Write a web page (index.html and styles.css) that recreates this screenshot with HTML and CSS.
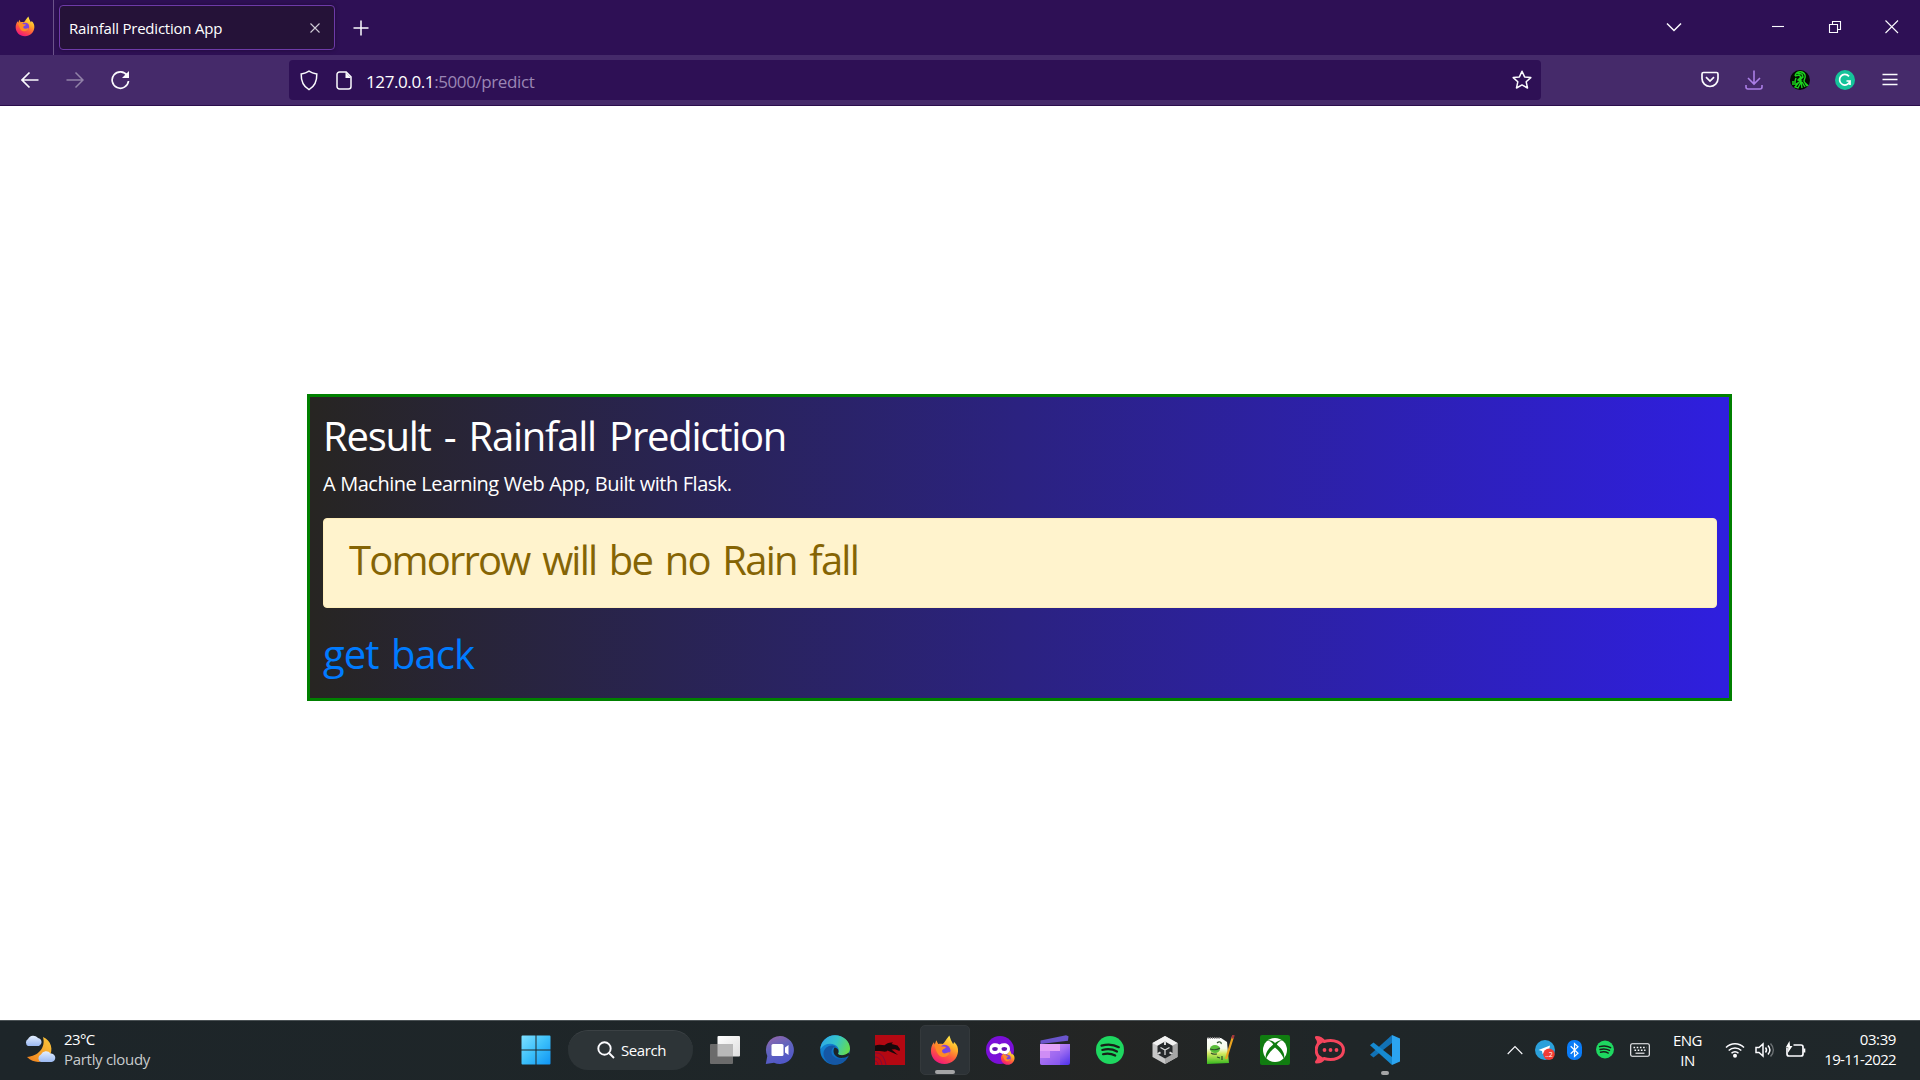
FILE: index.html
```html
<!DOCTYPE html>
<html lang="en">
<head>
<meta charset="utf-8">
<title>Rainfall Prediction App</title>
<link rel="stylesheet" href="styles.css">
</head>
<body>
<svg width="0" height="0" class="defs" aria-hidden="true">
  <defs>
    <linearGradient id="ffBody" x1=".8" y1="0" x2=".3" y2="1"><stop offset="0" stop-color="#fff44f"/><stop offset=".35" stop-color="#ffb028"/><stop offset=".65" stop-color="#ff5a3c"/><stop offset="1" stop-color="#f0147e"/></linearGradient>
    <radialGradient id="ffCore"><stop offset="0" stop-color="#6a4be8"/><stop offset="1" stop-color="#8a3fd8"/></radialGradient>
    <linearGradient id="winG" x1="0" y1="0" x2="1" y2="1"><stop offset="0" stop-color="#7fe0ff"/><stop offset=".5" stop-color="#3cc0fa"/><stop offset="1" stop-color="#0f94f4"/></linearGradient>
    <linearGradient id="chatG" x1="0" y1="0" x2=".4" y2="1"><stop offset="0" stop-color="#9a66a8"/><stop offset=".5" stop-color="#6264bd"/><stop offset="1" stop-color="#5158c8"/></linearGradient>
    <linearGradient id="edgeTop" x1="0" y1=".3" x2="1" y2=".6"><stop offset="0" stop-color="#2fa8e8"/><stop offset=".5" stop-color="#35c5c9"/><stop offset="1" stop-color="#66dc4c"/></linearGradient>
    <linearGradient id="edgeBot" x1="0" y1="0" x2=".6" y2="1"><stop offset="0" stop-color="#1793e0"/><stop offset="1" stop-color="#0b62b5"/></linearGradient>
    <linearGradient id="moonG" x1="1" y1="0" x2="0" y2="1"><stop offset="0" stop-color="#fbc93c"/><stop offset="1" stop-color="#f07e1c"/></linearGradient>
    <linearGradient id="cloudG" x1="0" y1="0" x2="0" y2="1"><stop offset="0" stop-color="#e4efff"/><stop offset="1" stop-color="#9bb9f2"/></linearGradient>
    <linearGradient id="tvG" x1="0" y1="0" x2="1" y2="1"><stop offset="0" stop-color="#fff"/><stop offset="1" stop-color="#dedede"/></linearGradient>
    <linearGradient id="clipG" x1="0" y1="0" x2="1" y2="1"><stop offset="0" stop-color="#e6a4f8"/><stop offset=".5" stop-color="#a673f2"/><stop offset="1" stop-color="#4c30ea"/></linearGradient>
    <linearGradient id="nppG" x1="0" y1="0" x2="0" y2="1"><stop offset="0" stop-color="#fff"/><stop offset=".4" stop-color="#f4fbe8"/><stop offset=".6" stop-color="#d3ea62"/><stop offset="1" stop-color="#35b81e"/></linearGradient>
    <symbol id="firefox" viewBox="0 0 30 30">
      <path d="M15 29.500C7 29.500 1 23.500 1 16c0-4 1.200-6.500 3-9l.9 2.300L6.500 5l2 3.800c1.500-.5 3-.5 4.500 0 1.600-1 2.500-3 4-5L20 0l1.800 5 2.200 4 .9-2.200C28.500 10 29.200 13 29 16.500 28.500 24 22.500 29.500 15 29.500z" fill="url(#ffBody)"/>
      <circle cx="15.200" cy="15.500" r="6" fill="url(#ffCore)"/>
      <path d="M4.500 10c2.500-1.500 5-1 7 1.200 2 .4 3.800.3 5 .8-.5 2-3.300 2-4 3.500-.4 1.500.8 3 2.800 3 2.200.1 3.500-1.700 5.500-.8-1.500 4-6 5.500-9.500 4C7 19.500 6.500 15 4.500 10z" fill="#ff8a25"/>
    </symbol>
    <symbol id="spotify" viewBox="0 0 28 28">
      <circle cx="14" cy="14" r="14" fill="#1ed760"/>
      <path d="M5.500 9.600c6-1.700 12.400-1.200 17.300 1.600M6.300 14c5-1.400 10.400-.9 14.700 1.500M7 18.200c4.200-1.200 8.500-.7 12.200 1.300" fill="none" stroke="#172019" stroke-width="2.200" stroke-linecap="round"/>
    </symbol>
  </defs>
</svg>

<header class="tabstrip">
  <div class="fx-view"><svg width="20" height="21"><use href="#firefox"/></svg></div>
  <div class="tab">
    <span class="tab-title">Rainfall Prediction App</span>
    <svg class="tab-close" width="10" height="10" viewBox="0 0 10 10"><path d="M.5.500l9 9M9.500.500l-9 9" class="line"/></svg>
  </div>
  <svg class="new-tab" width="16" height="16" viewBox="0 0 16 16"><path d="M8 .500v15M.5 8h15" class="line w15"/></svg>
  <div class="window-buttons">
    <svg class="list-tabs" width="16" height="10" viewBox="0 0 16 10"><path d="M1 1.500l7 7 7-7" class="line w15"/></svg>
    <svg width="57" height="14" viewBox="0 0 57 14"><path d="M23 6.500h12" class="line"/></svg>
    <svg width="57" height="14" viewBox="0 0 57 14"><path d="M23.500 4.500h8v8h-8zM26.500 4.500v-3h8v8h-3" class="line"/></svg>
    <svg width="57" height="14" viewBox="0 0 57 14"><path d="M22.500.500l12.500 12.500M35 .500L22.500 13" class="line"/></svg>
  </div>
</header>

<nav class="toolbar">
  <div class="nav-buttons">
    <svg width="18" height="18" viewBox="0 0 18 18"><path d="M17.500 9H1.200M8.500 1.500L1 9l7.500 7.500" class="line w18"/></svg>
    <svg class="dim" width="18" height="18" viewBox="0 0 18 18"><path d="M.5 9h16.300M9.500 1.500L17 9l-7.500 7.500" class="line w15"/></svg>
    <svg class="reload" width="20" height="20" viewBox="0 0 20 20"><path d="M17.200 5.500A8.200 8.200 0 1 0 18.500 11" class="line w18"/><path d="M19 1v7h-7z" fill="#fbfbfe"/></svg>
  </div>
  <div class="urlbar">
    <svg width="18" height="21" viewBox="0 0 18 21"><path d="M9 1.200c2.200 1.600 4.800 2.400 7.800 2.800.2 6.500-1.800 12.300-7.800 15.600C3 16.300 1 10.500 1.200 4 4.200 3.600 6.800 2.800 9 1.200z" class="line w15"/></svg>
    <svg class="page-icon" width="16" height="19" viewBox="0 0 16 19"><path d="M3.500 1h6.700L15 5.800v9.700A2.500 2.500 0 0 1 12.500 18h-9A2.500 2.500 0 0 1 1 15.500v-12A2.500 2.500 0 0 1 3.500 1z" class="line w15"/><path d="M9.500 1v6H15z" fill="#fbfbfe"/></svg>
    <span class="url"><b>127.0.0.1</b>:5000/predict</span>
    <svg class="star" width="20" height="20" viewBox="0 0 20 20"><path d="M10 1.200l2.600 5.700 6.200.7-4.600 4.200 1.300 6.200-5.500-3.100L4.500 18l1.300-6.200L1.200 7.600l6.200-.7z" class="line w15" stroke-linejoin="round"/></svg>
  </div>
  <div class="extensions">
    <svg width="18" height="17" viewBox="0 0 18 17"><path d="M2.500 1.500h13a1.500 1.500 0 0 1 1.500 1.500v4.500a8 8 0 0 1-16 0V3a1.500 1.500 0 0 1 1.500-1.500zM5 6.200l4 3.800 4-3.800" class="line w18"/></svg>
    <svg width="18" height="20" viewBox="0 0 18 20"><path d="M9 .500V13M3 8l6 6 6-6M1 15v2a2 2 0 0 0 2 2h12a2 2 0 0 0 2-2v-2" fill="none" stroke="#ab7fe6" stroke-width="1.600"/></svg>
    <svg width="20" height="20" viewBox="0 0 20 20"><circle cx="10" cy="10" r="10" fill="#050a05"/><path d="M5 6c1-5 8-6 10-1 1 3-1 4-1 6s3 3 4 5M5 6l4-1 2 2-3 3 3 1-5 3-4 0M7 3l5 1 1 3-3 3M9 12l-4 5 3 1 3-6 1 6M12 12l3 5M15 13l2 3M2 12l4 0M6 8l-1 3" fill="none" stroke="#1bd51d" stroke-width="1.400"/></svg>
    <svg class="grammar" width="20" height="20" viewBox="0 0 20 20"><circle cx="10" cy="10" r="10" fill="#15c39a"/><path d="M14 6.400A5.300 5.300 0 1 0 15 11h-3.500M15 10.500V15" fill="none" stroke="#fff" stroke-width="1.700"/></svg>
    <svg width="16" height="14" viewBox="0 0 16 14"><path d="M.5 1.500h15M.5 6.500h15M.5 11.500h15" class="line w15"/></svg>
  </div>
</nav>

<main class="page">
  <section class="container">
    <h1 class="title">Result - Rainfall Prediction</h1>
    <p class="lead">A Machine Learning Web App, Built with Flask.</p>
    <div class="alert"><span class="result">Tomorrow will be no Rain fall</span></div>
    <a class="back" href="#">get back</a>
  </section>
</main>

<footer class="taskbar">
  <div class="weather">
    <svg width="32" height="30" viewBox="0 0 32 30"><path d="M19 2c8 3 11 13 6 20-5 6-15 7-22 0 11-1 19-9 16-20z" fill="url(#moonG)"/><path d="M4 11a4 4 0 0 1 0-7 6 6 0 0 1 10-1 4.200 4.200 0 0 1 1 8z" fill="url(#cloudG)"/><path d="M17 27a4 4 0 0 1 0-7.500 5.500 5.500 0 0 1 9.500-1 4.200 4.200 0 0 1 1 8.500z" fill="url(#cloudG)"/></svg>
    <div class="weather-text"><span class="temp">23°C</span><span class="sky">Partly cloudy</span></div>
  </div>

  <div class="apps">
    <span class="app start"><svg width="30" height="30" viewBox="0 0 30 30"><path d="M.5.500h14v14H.500V1.500a1 1 0 0 1 1-1zM15.500.500h13a1 1 0 0 1 1 1v13h-14zM.5 15.500h14v14h-13a1 1 0 0 1-1-1zM15.500 15.500h14v13a1 1 0 0 1-1 1h-13z" fill="url(#winG)"/></svg></span>
    <div class="search">
      <svg width="18" height="18" viewBox="0 0 18 18"><path d="M12.500 12.500L17 17M13.700 7.500A6.200 6.200 0 1 1 1.300 7.500a6.200 6.200 0 0 1 12.400 0z" class="line w2"/></svg>
      <span class="search-label">Search</span>
    </div>
    <span class="app"><svg width="30" height="30" viewBox="0 0 30 30"><rect x="7.500" y="1" width="22.500" height="20.500" rx="1" fill="url(#tvG)"/><rect x="0" y="9" width="23" height="20" rx="1" fill="#6b6b6b"/><path d="M7.500 9H23v12.500H7.500z" fill="#b9b9b9"/></svg></span>
    <span class="app"><svg width="30" height="30" viewBox="0 0 30 30"><path d="M15 1a14 14 0 1 1-6 26.700L.8 29l1.500-8A14 14 0 0 1 15 1z" fill="url(#chatG)"/><rect x="6.500" y="9" width="12" height="12" rx="1.500" fill="#fff"/><path d="M20 12.500l3.500-2.500v10L20 17.500z" fill="#fff"/></svg></span>
    <span class="app"><svg width="30" height="30" viewBox="0 0 30 30"><circle cx="15" cy="15" r="14.800" fill="url(#edgeBot)"/><path d="M.3 14C1 6 7.500.2 15 .2 23 .2 30 6 30 13.500c0 4.500-3.500 7-7.500 7-3.500 0-5-1.200-4.500-2.500 1.500-2 1-6-3-8-5-2.500-11-1-14.700 4z" fill="url(#edgeTop)"/><path d="M11.500 17c0-3 2-5.500 4.500-5.500-5-3-12 .5-12.500 6.500-.3 5 4 11.500 12 11.500 4.500 0 9.500-3 12-7-7 3.500-16 .500-16-5.500z" fill="#1557a5"/><path d="M14.500 12.500c-3 5 1 11.500 9 10.300 2.500-.3 4.500-1.500 6-2.800l-1-2.500c-3 3-8 3.500-10.500 1.500 1.200-2.500.5-6-3.500-6.500z" fill="#1d2427"/></svg></span>
    <span class="app"><svg width="30" height="30" viewBox="0 0 30 30"><path d="M0 0h30v30H0z" fill="#b40812"/><path d="M0 10.500c4-1.500 7-.5 9.500-.3 2-1.700 5-3.200 8.500-2.700l-1.500 1.500 6 1.500 2.500 3.500-.5 2-4.500-1.700-3.500.2 2.500 2 4 3.500-6-2.500-4.500-2c-2 2.500-5 0-12.500.5z" fill="#17090b"/><path d="M0 18c5-.5 9 2 11 12M0 22c4 0 6 3 7 8M0 26c2 0 3 2 3 4" fill="none" stroke="#7d0b3c"/></svg></span>
    <span class="app active"><svg width="29" height="30"><use href="#firefox"/></svg></span>
    <span class="app"><svg width="30" height="30" viewBox="0 0 30 30"><circle cx="15" cy="15" r="14" fill="#7b0fd8"/><path d="M4.500 14c0-6 6-7 10-4.500C18.500 7 25 8 25 14s-6 6.500-10.200 3.500C10.500 20.500 4.500 20 4.500 14z" fill="#fff"/><ellipse cx="10" cy="14" rx="2.800" ry="1.900" fill="#6212b0"/><ellipse cx="19.300" cy="14" rx="2.800" ry="1.900" fill="#6212b0"/><use href="#firefox" x="15.500" y="15.500" width="14.500" height="14.500"/></svg></span>
    <span class="app"><svg width="30" height="30" viewBox="0 0 30 30"><path d="M.5 5.500L26 .300l2.500 1-.5 4.500L.5 9z" fill="#6a55cc"/><path d="M0 9h30v19a2 2 0 0 1-2 2H2a2 2 0 0 1-2-2z" fill="url(#clipG)"/><path d="M0 9h20v7H0z" fill="#e3a2f8"/><path d="M0 16h10v7H0z" fill="#cf8df5"/><path d="M10 16h10v7H10zM0 23h20v7H2a2 2 0 0 1-2-2z" fill="#9a63ee" opacity=".55"/></svg></span>
    <span class="app"><svg width="28" height="28"><use href="#spotify"/></svg></span>
    <span class="app"><svg width="26" height="28" viewBox="0 0 26 28"><path d="M13 0l12.500 7v14L13 28 .5 21V7z" fill="#c8c8c8"/><path d="M13 0l12.500 7L13 14 .5 7z" fill="#f2f2f2"/><path d="M13 14l12.500-7v14L13 28z" fill="#a6a6a6"/><path d="M13 5.500l7.500 4.200v8.500L13 22.500l-7.500-4.300V9.700z" fill="#26292b"/><path d="M13 14v5M13 14L8.500 11.500M13 14l4.500-2.500" stroke="#d8d8d8" stroke-width="1.300"/><path d="M13 5v4M5.500 18l3-1.700M20.500 18l-3-1.700" stroke="#d8d8d8" stroke-width="2"/></svg></span>
    <span class="app"><svg width="30" height="30" viewBox="0 0 30 30"><path d="M2 3h14l6 4 2 21-22 1z" fill="url(#nppG)"/><path d="M2.500 3h13" stroke="#888" stroke-width="2" stroke-dasharray="1.200 1"/><ellipse cx="10" cy="14" rx="5" ry="4" fill="#58bd38"/><path d="M5 14c3 1 7 1 10-1M12 8c2-2 5-1 4 1M6 18c2 2 4 1 6 1M12 22l3 1M17 21v4" fill="none" stroke="#2e4f2a" stroke-width="1.200"/><path d="M28 1.500L21 24" stroke="#eba420" stroke-width="2.200"/><path d="M28.500 0l-1 3.500" stroke="#a3383c" stroke-width="2.500"/></svg></span>
    <span class="app"><svg width="30" height="30" viewBox="0 0 30 30"><rect width="30" height="30" rx="2" fill="#107c10"/><circle cx="15" cy="15" r="12" fill="#fff"/><path d="M7 5.500c3-1 6 .8 8 2.500 2-1.700 5-3.500 8-2.500-3 0-5 2-6.200 4C21 13 25.500 18 24 24c-2-4.500-5-8.500-9-11.500C11 15.500 8 19.500 6 24c-1.500-6 3-11 7.200-14.500C12 7.500 10 5.500 7 5.500z" fill="#107c10"/></svg></span>
    <span class="app"><svg width="30" height="28" viewBox="0 0 30 28"><path d="M1.500 1.500c3 0 6 1.700 7.500 4 10-3 19.500 1.200 19.500 8.500S19 25.500 9 22.500c-1.500 2.300-4.500 3.500-7.500 3.500 2-2.500 2.500-4.500 1.500-6-2.500-4-2.500-8 0-12 1-2 .500-4-1.500-6.500z" fill="none" stroke="#f5455c" stroke-width="3" stroke-linejoin="round"/><path d="M2 2c3 .5 5 2 6.500 4L4 9zM2 26c3-.5 5-2 6.500-4L4 19z" fill="#f5455c"/><g fill="#f5455c"><circle cx="9.500" cy="14" r="1.900"/><circle cx="15.500" cy="14" r="1.900"/><circle cx="21.500" cy="14" r="1.900"/></g></svg></span>
    <span class="app running"><svg width="30" height="30" viewBox="0 0 30 30"><path d="M22 0v8L3.500 22.500 0 19.700z" fill="#1272b6"/><path d="M3.500 7.500L22 22v8L0 10.300z" fill="#168ad0"/><path d="M22 0l8 3.500v23L22 30z" fill="#2ba4f0"/></svg></span>
  </div>

  <div class="tray">
    <svg width="16" height="10" viewBox="0 0 16 10"><path d="M.7 9L8 1.500 15.300 9" class="line"/></svg>
    <svg class="telegram" width="20" height="20" viewBox="0 0 20 20"><circle cx="10" cy="10" r="10" fill="#2ba0da"/><path d="M3.500 10l11.500-4.500-2 10-3.500-3-2 1.500-.5-3z" fill="#fff"/><circle cx="14" cy="14.300" r="5.700" fill="#f23c34"/><text x="14" y="17" class="badge-text">..2</text></svg>
    <svg class="bluetooth" width="15" height="20" viewBox="0 0 15 20"><rect width="15" height="20" rx="7" fill="#0a7cf8"/><path d="M3.700 6.300l7.300 7-3.500 3.200V3.500L11 6.700l-7.300 7" fill="none" stroke="#fff" stroke-width="1.200"/></svg>
    <svg class="tray-spotify" width="18" height="19"><use href="#spotify"/></svg>
    <svg class="keyboard" width="20" height="14" viewBox="0 0 20 14"><rect x=".7" y=".7" width="18.600" height="12.600" rx="1.500" class="line"/><path d="M3.500 4.500h13M4.500 7.300h11" class="line w15" stroke-dasharray="1.600 1.600"/><path d="M5.500 10.200h9" class="line"/></svg>
    <div class="lang"><span>ENG</span><span>IN</span></div>
    <svg class="wifi" width="20" height="16" viewBox="0 0 20 16"><path d="M1 5.500a12.700 12.700 0 0 1 18 0M3.700 8.500a9 9 0 0 1 12.600 0M6.500 11.300a5 5 0 0 1 7 0" class="line w15"/><circle cx="10" cy="13.700" r="2" fill="#fff"/></svg>
    <svg class="volume" width="20" height="16" viewBox="0 0 20 16"><path d="M1 5.500h3L8 2v12l-4-3.500H1zM10.500 5.500c1.200 1.500 1.200 3.500 0 5M13 3.500c2.300 2.700 2.300 6.300 0 9" class="line w15"/><path d="M15.500 1.500c3.700 4 3.700 9 0 13" class="line w15" opacity=".35"/></svg>
    <svg class="battery" width="21" height="17" viewBox="0 0 21 17"><path d="M8.500 4H16a2 2 0 0 1 2 2v7a2 2 0 0 1-2 2H4a2 2 0 0 1-2-2V7" class="line w18"/><path d="M18.500 7.500h1.800v4h-1.800z" fill="#fff"/><path d="M4.500 0L.7 6.500h2.600L2.800 12 7.500 5H5z" fill="#fff"/></svg>
    <div class="clock"><span class="time">03:39</span><span class="date">19-11-2022</span></div>
  </div>
</footer>
</body>
</html>
```
FILE: styles.css
```css
* { box-sizing: border-box; }
body {
  margin: 0;
  width: 1920px;
  height: 1080px;
  overflow: hidden;
  display: flex;
  flex-direction: column;
  background: #fff;
  color: #fff;
  font-family: "Open Sans", "Noto Sans", sans-serif;
}
svg { display: block; flex: none; }
span, a, h1, p { white-space: nowrap; }
.defs { position: absolute; }
.line { fill: none; stroke: #fbfbfe; stroke-width: 1.1; }
.w15 { stroke-width: 1.5; }
.w18 { stroke-width: 1.7; }
.w2 { stroke-width: 1.9; }
.dim { opacity: .42; }

/* Tab strip */
.tabstrip { height: 55px; flex: none; display: flex; align-items: center; background: #2e1055; }
.fx-view { width: 54px; height: 55px; padding: 16px 0 0 15px; border-right: 1px solid #6b5389; }
.tab {
  width: 276px; height: 45px; margin-left: 5px; padding: 0 14px 0 9px;
  display: flex; align-items: center; justify-content: space-between;
  background: #251238; border: 1px solid #6e3aa8; border-radius: 4px;
  box-shadow: 0 0 4px rgba(0, 0, 0, .35);
}
.tab-title { font-size: 15px; letter-spacing: -.22px; }
.tab-close { opacity: .8; }
.new-tab { margin-left: 18px; }
.window-buttons { margin-left: auto; padding-bottom: 1px; display: flex; align-items: center; }
.list-tabs { margin-right: 67px; }

/* Navigation bar */
.toolbar { height: 51px; flex: none; display: flex; background: #452a6a; border-bottom: 1px solid #2a0d4c; }
.nav-buttons { width: 289px; padding: 0 0 1px 21px; display: flex; align-items: center; gap: 27px; }
.reload { margin-left: -1px; }
.urlbar { width: 1252px; height: 40px; margin-top: 5px; padding: 0 9px 0 11px; display: flex; align-items: center; background: #2e1055; border-radius: 4px; }
.page-icon { margin-left: 18px; }
.url { margin-left: 14px; padding-top: 3px; font-size: 17px; letter-spacing: -.4px; color: #9a86b4; }
.url b { font-weight: 400; color: #fff; }
.star { margin-left: auto; }
.extensions { flex: 1; padding: 0 22px 1px 160px; display: flex; align-items: center; justify-content: space-between; }
.grammar { margin: 0 1px 0 -1px; }

/* Page */
.page { flex: 1; padding: 288px 0 0 307px; }
.container {
  width: 1425px; height: 307px; padding: 13px 12px 0 13px;
  display: flex; flex-direction: column; align-items: flex-start;
  border: 3px solid #008000;
  background: linear-gradient(to right, #272522, #2f1fdf);
}
.title { margin: 2px 0 0; font-size: 40px; line-height: 48px; font-weight: 400; letter-spacing: -1.25px; word-spacing: 4px; }
.lead { margin: 9px 0 0; font-size: 20px; line-height: 30px; letter-spacing: -.5px; word-spacing: .4px; }
.alert { width: 100%; height: 90px; margin-top: 19px; padding: 17px 25px; background: #fff3cd; border: 1px solid #ffeeba; border-radius: 4px; }
.result { display: block; font-size: 40px; line-height: 48px; letter-spacing: -1.8px; word-spacing: 4px; color: #856404; }
.back { margin-top: 22px; font-size: 40px; line-height: 48px; letter-spacing: -.95px; word-spacing: 3px; color: #007bff; text-decoration: none; }

/* Taskbar */
.taskbar { height: 60px; flex: none; padding-bottom: 2px; display: flex; align-items: center; background: linear-gradient(to right, #1d2529, #1f2628 45%, #242524 58%, #1f2628 70%, #1f272a); border-top: 1px solid #4b5255; font-size: 15px; }
.weather { width: 507px; padding-left: 24px; display: flex; gap: 8px; align-items: center; }
.weather-text, .lang, .clock { display: flex; flex-direction: column; line-height: 20px; padding-bottom: 1px; }
.temp { letter-spacing: -.6px; }
.sky { color: #c8cbcc; letter-spacing: -.3px; }
.apps { display: flex; align-items: center; }
.app { width: 55px; height: 50px; display: flex; align-items: center; justify-content: center; border-radius: 5px; position: relative; }
.app.start { width: 61px; padding-right: 3px; }
.search { width: 125px; height: 40px; margin-right: 4px; padding-left: 29px; display: flex; align-items: center; gap: 6px; background: #2d3437; border-top: 1px solid #3b4144; border-radius: 20px; }
.search-label { letter-spacing: -.4px; }
.active { width: 50px; margin: 0 2.5px; background: #2c3236; border: 1px solid #34393c; }
.active::after, .running::after { content: ""; position: absolute; bottom: 0; width: 20px; height: 4px; border-radius: 2px; background: #a4a5a6; }
.running::after { width: 8px; }
.tray { margin-left: auto; padding-right: 24px; display: flex; align-items: center; }
.telegram { margin-left: 12px; }
.badge-text { font-size: 7px; fill: #fff; text-anchor: middle; }
.bluetooth { margin-left: 12px; }
.tray-spotify { margin-left: 14px; }
.keyboard { margin-left: 16px; }
.lang { width: 75px; align-items: center; letter-spacing: -.5px; padding-bottom: 0; }
.volume, .battery { margin-left: 10px; }
.clock { width: 90px; align-items: flex-end; letter-spacing: -.4px; }
.date { letter-spacing: -.65px; }
```
